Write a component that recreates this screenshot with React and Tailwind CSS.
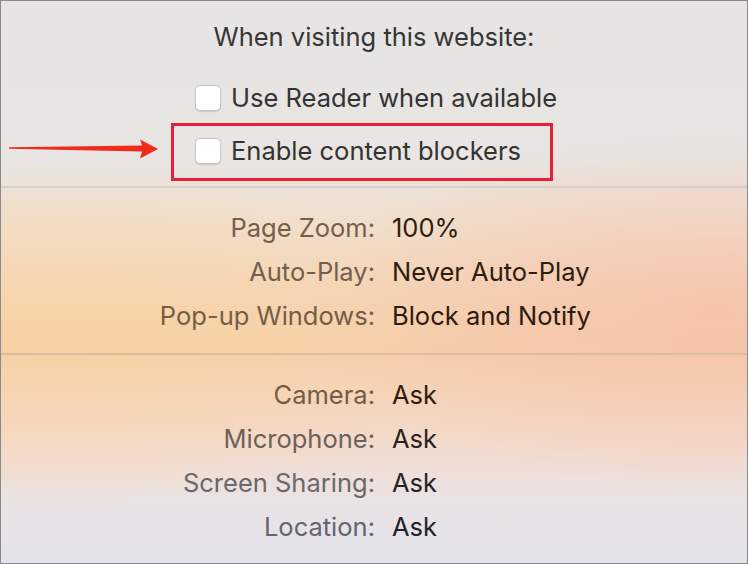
export default function App() {
  const sec2 = [
    ["Page Zoom:", "100%", "text-[#735f4c]", "text-[#2e1c0e]"],
    ["Auto-Play:", "Never Auto-Play", "text-[#735f4c]", "text-[#2e1c0e]"],
    ["Pop-up Windows:", "Block and Notify", "text-[#735d48]", "text-[#2e1a0c]"],
  ];
  const sec3 = [
    ["Camera:", "Ask", "text-[#735c46]", "text-[#2e1c0e]"],
    ["Microphone:", "Ask", "text-[#6c605a]", "text-[#2a2220]"],
    ["Screen Sharing:", "Ask", "text-[#6a686c]", "text-[#25242a]"],
    ["Location:", "Ask", "text-[#636470]", "text-[#22232a]"],
  ];
  const Row = ({ l, v, lc, vc }) => (
    <div className="flex h-[44px] items-center text-[25.5px]">
      <div className={"w-[374px] text-right " + lc}>{l}</div>
      <div className={"pl-[17px] " + vc}>{v}</div>
    </div>
  );
  const Box = () => (
    <div className="w-[26px] h-[26px] rounded-[5px] bg-white border border-[#c9c7c5] shadow-[0_0.5px_1px_rgba(0,0,0,0.12)] shrink-0" />
  );
  return (
    <div className="relative w-[748px] h-[564px] overflow-hidden border border-[#8a8a8a] font-['Inter',sans-serif] bg-[radial-gradient(ellipse_55%_30%_at_8%_60%,rgba(250,212,160,0.55),transparent),radial-gradient(ellipse_55%_32%_at_96%_55%,rgba(246,186,166,0.6),transparent),linear-gradient(to_bottom,#e6e5e4_0%,#e8e5e2_28%,#f1dfcc_40%,#f5d3b2_55%,#f6cfaa_62%,#f3dacb_78%,#ebe3e4_89%,#e1e3ec_100%)]">
      <div className="h-[187px] border-b-2 border-[#d6cfca] flex flex-col">
        <div className="pt-[20px] h-[52px] text-center text-[25.5px] leading-[32px] text-[#363636]">
          When visiting this website:
        </div>
        <div className="pl-[194px] mt-[23px] flex flex-col gap-[9px]">
          <div className="flex items-center gap-[10px] h-[44px] text-[25.5px] text-[#333333]">
            <Box />
            <span>Use Reader when available</span>
          </div>
          <div className="flex items-center gap-[10px] h-[44px] text-[25.5px] text-[#333333]">
            <Box />
            <span>Enable content blockers</span>
          </div>
        </div>
      </div>
      <div className="pt-[18px] pb-[15px] border-b-2 border-[#dcbc9f]">
        {sec2.map(([l, v, lc, vc]) => (
          <Row key={l} l={l} v={v} lc={lc} vc={vc} />
        ))}
      </div>
      <div className="pt-[18px]">
        {sec3.map(([l, v, lc, vc]) => (
          <Row key={l} l={l} v={v} lc={lc} vc={vc} />
        ))}
      </div>
      <div className="absolute left-[170px] top-[122px] w-[382px] h-[58px] border-[3px] border-[#e81f3b]" />
      <svg className="absolute left-0 top-[130px]" width="170" height="40" viewBox="0 130 170 40">
        <polygon points="8,146.2 141,144.6 139,138.5 157,148 139,157.5 141,150.4 8,147.8" fill="#f12a1c" />
      </svg>
    </div>
  );
}
